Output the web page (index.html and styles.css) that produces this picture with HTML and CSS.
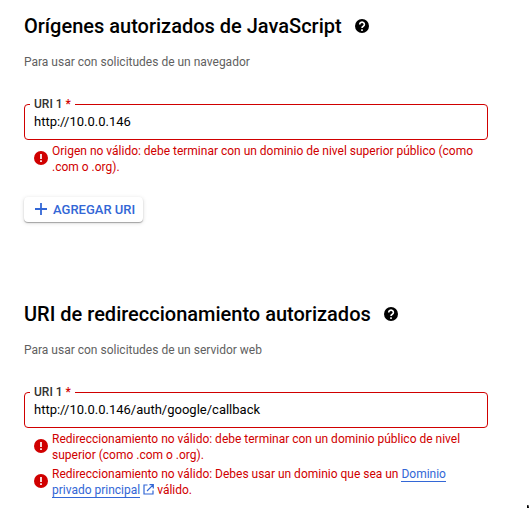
FILE: index.html
```html
<!DOCTYPE html>
<html lang="es">
<head>
<meta charset="utf-8">
<title>Credenciales</title>
<link rel="stylesheet" href="styles.css">
</head>
<body>
<section class="block">
  <h2>Orígenes autorizados de JavaScript
    <svg class="help" viewBox="0 0 14 14"><circle cx="7" cy="7" r="7"/><path d="M4.700 5.400a2.350 2.200 0 1 1 3.600 1.850Q7 8 7 9.100M7 10.200v1.700"/></svg></h2>
  <p class="hint">Para usar con solicitudes de un navegador</p>
  <div class="field"><span class="label">URI 1 <b>*</b></span>http://10.0.0.146</div>
  <div class="error"><svg viewBox="0 0 14 14"><circle cx="7" cy="7" r="7"/><path d="M7 3v5M7 9.200v1.900"/></svg>
    <span>Origen no válido: debe terminar con un dominio de nivel superior público (como<br>.com o .org).</span></div>
  <button class="add"><svg viewBox="0 0 12 12"><path d="M6 0v12M0 6h12"/></svg>AGREGAR URI</button>
</section>
<section class="block last">
  <h2>URI de redireccionamiento autorizados
    <svg class="help" viewBox="0 0 14 14"><circle cx="7" cy="7" r="7"/><path d="M4.700 5.400a2.350 2.200 0 1 1 3.600 1.850Q7 8 7 9.100M7 10.200v1.700"/></svg></h2>
  <p class="hint">Para usar con solicitudes de un servidor web</p>
  <div class="field"><span class="label">URI 1 <b>*</b></span>http://10.0.0.146/auth/google/callback</div>
  <div class="error"><svg viewBox="0 0 14 14"><circle cx="7" cy="7" r="7"/><path d="M7 3v5M7 9.200v1.900"/></svg>
    <span>Redireccionamiento no válido: debe terminar con un dominio público de nivel<br>superior (como .com o .org).</span></div>
  <div class="error second"><svg viewBox="0 0 14 14"><circle cx="7" cy="7" r="7"/><path d="M7 3v5M7 9.200v1.900"/></svg>
    <span>Redireccionamiento no válido: Debes usar un dominio que sea un <a>Dominio</a><br><a>privado principal</a><svg class="ext" viewBox="0 0 11 11"><path d="M4.500 1H1v9h9V6.500M6.500.7h3.800v3.800M10.300.7L4 7"/></svg> válido.</span></div>
</section>
<i class="corner"></i>
</body>
</html>
```
FILE: styles.css
```css
* { box-sizing: border-box; }
body { margin: 0; height: 508px; background: #fff; font-family: Roboto, sans-serif; color: #000; position: relative; }
.block { height: 288px; padding: 14px 0 0 24px; }
.block.last { height: 220px; }
h2 { display: flex; align-items: center; margin: 0; height: 24px; font-size: 20px; line-height: 24px; font-weight: 500; white-space: nowrap; }
.help { width: 14px; height: 14px; margin-left: 13px; }
.help path { fill: none; stroke: #fff; stroke-width: 1.600; }
.hint { margin: 16px 0 0; font-size: 12px; line-height: 16px; color: #5f5f5f; }
.field { position: relative; width: 464px; height: 36px; margin-top: 34px; padding-left: 9px; border: 1px solid #d00000; border-radius: 4px; font-size: 13px; line-height: 34px; }
.label { position: absolute; left: 5px; top: -9px; padding: 0 4px; background: #fff; font-size: 12px; line-height: 16px; font-weight: 500; color: #333; white-space: nowrap; }
.label b { color: #d00000; font-weight: 500; }
.error { display: flex; gap: 4px; margin: 3px 0 0 10px; font-size: 11.990px; line-height: 16px; color: #d00000; white-space: nowrap; }
.error > svg { width: 14px; height: 14px; margin-top: 8px; fill: #d00000; }
.error > svg path { stroke: #fff; stroke-width: 1.700; }
.second { margin-top: 3px; }
.error a { color: #3367d6; border-bottom: 1px solid #3367d6; }
.error .ext { width: 11px; height: 11px; margin-left: 3px; vertical-align: -1px; fill: none; stroke: #3367d6; stroke-width: 1.200; }
.add { display: flex; align-items: center; gap: 6px; width: 119px; height: 25px; margin-top: 22px; padding: 0 0 1px 11px; border: 0; border-radius: 4px; background: #fff; box-shadow: 0 1px 1px rgba(0,0,0,.3), 0 1px 4px rgba(0,0,0,.15); font: 500 13px Roboto, sans-serif; color: #3367d6; white-space: nowrap; }
.add svg { flex: none; width: 12px; height: 12px; stroke: #3367d6; stroke-width: 1.800; }
.corner { position: absolute; right: 0; bottom: 0; width: 2px; height: 3px; background: linear-gradient(to bottom left, #bbb, #000 60%); }
```
